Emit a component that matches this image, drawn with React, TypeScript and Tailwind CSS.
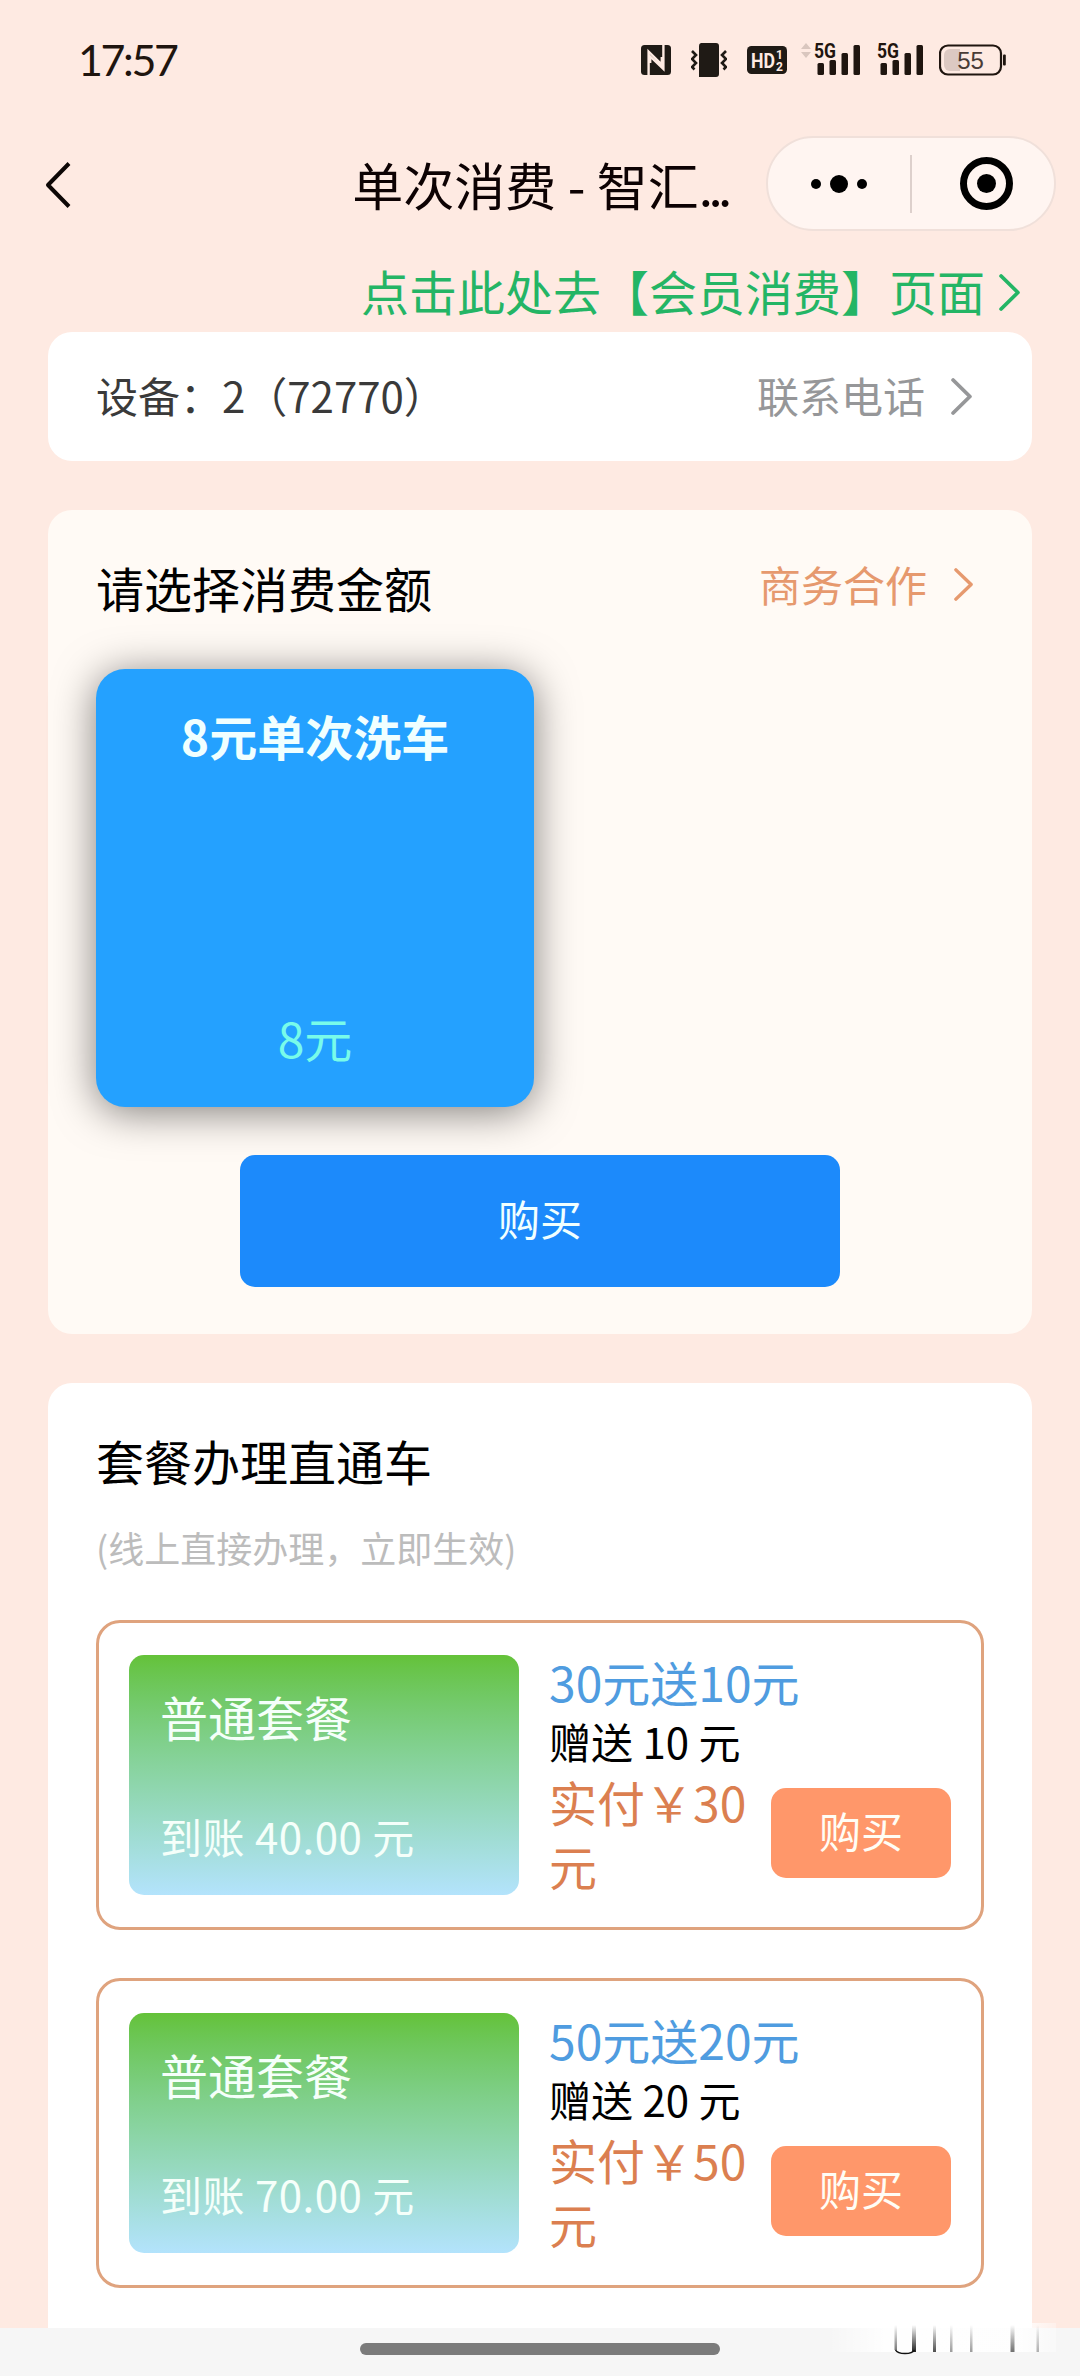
interface Plan {
	title: string;
	bonus: string;
	price: string;
	credited: string;
}

const plans: Plan[] = [
	{ title: "30元送10元", bonus: "10", price: "30", credited: "40.00" },
	{ title: "50元送20元", bonus: "20", price: "50", credited: "70.00" },
];

function Chevron({ className }: { className: string }) {
	return (
		<svg
			className={className}
			viewBox="0 0 20 36"
			fill="none"
			stroke="currentColor"
			strokeWidth="3.6"
			strokeLinecap="round"
			strokeLinejoin="round"
			preserveAspectRatio="none"
		>
			<path d="M2 2 18 18 2 34" />
		</svg>
	);
}

function Signal({ roaming }: { roaming?: boolean }) {
	return (
		<svg
			className={
				roaming
					? "ml-[14px] mb-[6px] w-[62px] h-[42px] overflow-visible"
					: "ml-[14px] mb-[6px] w-[49px] h-[42px] overflow-visible"
			}
			viewBox={roaming ? "-13 -6 62 42" : "0 -6 49 42"}
			fill="#1f150f"
		>
			{roaming && (
				<path d="M-13 7l5-6 5 6zM-13 10l5 6 5-6z" fill="#d9c6be" />
			)}
			<text
				x="0"
				y="16"
				fontSize="20.5"
				fontWeight="700"
				fontFamily="Roboto, sans-serif"
				textLength="22"
				lengthAdjust="spacingAndGlyphs"
			>
				5G
			</text>
			<rect x="3.5" y="21" width="6.5" height="12" rx="1.5" />
			<rect x="15.5" y="18" width="6.5" height="15" rx="1.5" />
			<rect x="27.5" y="11" width="6.5" height="22" rx="1.5" />
			<rect x="39.5" y="3" width="6.5" height="30" rx="1.5" />
		</svg>
	);
}

function StatusBar() {
	return (
		<div className="flex h-[120px] items-center justify-between pl-[78px] pr-[74px]">
			<span className="mb-[2px] font-[Lato] text-[43px] leading-none tracking-[-2.4px] text-[#1f150f]">
				17:57
			</span>
			<div className="mb-px flex items-center">
				<svg className="h-[30px] w-[30px]" viewBox="0 0 30 30">
					<rect width="30" height="30" rx="3.5" fill="#1f1a15" />
					<path
						d="M7.6 30V6.5L20.8 19.5V12M22.4 0V24L9.2 11.5V18"
						fill="none"
						stroke="#feeae2"
						strokeWidth="2.4"
					/>
				</svg>
				<svg className="ml-5 h-[34px] w-9" viewBox="0 0 36 34">
					<path
						d="M10 0h15a3 3 0 0 1 3 3v28a3 3 0 0 1-3 3H8V3a3 3 0 0 1 2-3z"
						fill="#1f1a15"
					/>
					<path
						d="M1 8l4 4-4 4 4 4-4 4 2.500 2.500M35 8l-4 4 4 4-4 4 4 4-2.500 2.500"
						fill="none"
						stroke="#1f1a15"
						strokeWidth="2.6"
					/>
				</svg>
				<svg className="ml-5 mt-px h-7 w-10" viewBox="0 0 40 28">
					<rect width="40" height="28" rx="4.500" fill="#1f1a15" />
					<g fill="#feeae2" fontFamily="Roboto, sans-serif" fontWeight="700">
						<text x="4" y="21.500" fontSize="20" textLength="24" lengthAdjust="spacingAndGlyphs">
							HD
						</text>
						<text x="29" y="13" fontSize="12">
							1
						</text>
						<text x="29" y="24.500" fontSize="12">
							2
						</text>
					</g>
				</svg>
				<Signal roaming />
				<Signal />
				<svg className="ml-[13px] h-[32px] w-[67px]" viewBox="0 0 67 32">
					<rect x="1" y="1.500" width="61" height="29" rx="8" fill="none" stroke="#1f150f" strokeWidth="2.200" />
					<path d="M11 5h10v22H11a6 6 0 0 1-6-6V11a6 6 0 0 1 6-6z" fill="#dcc9c2" />
					<rect x="64" y="10.500" width="2.800" height="11" rx="1" fill="#1f150f" />
					<text
						x="31.500"
						y="24.500"
						fontSize="24"
						textAnchor="middle"
						fill="#4a3c36"
						fontFamily="Liberation Sans, sans-serif"
					>
						55
					</text>
				</svg>
			</div>
		</div>
	);
}

function NavBar() {
	return (
		<div className="relative flex h-32 items-center justify-center">
			<svg
				className="absolute left-[45px] top-[42px] h-[46px] w-[26px]"
				viewBox="0 0 26 46"
				fill="none"
				stroke="#0d0705"
				strokeWidth="4"
				strokeLinejoin="round"
			>
				<path d="M24 1.500 3 23 24 44.500" />
			</svg>
			<h1 className="text-[51px] leading-[60px] text-[#0d0203]">
				单次消费 - 智汇<span className="tracking-[-4.500px]">...</span>
			</h1>
			<div className="absolute right-6 top-4 flex h-[95px] w-[290px] items-center rounded-full border-2 border-[#f0e0da] bg-[#fff5f1]">
				<div className="flex flex-1 items-center justify-center gap-[9px]">
					<i className="size-[10px] rounded-full bg-black" />
					<i className="size-[18px] rounded-full bg-black" />
					<i className="size-[10px] rounded-full bg-black" />
				</div>
				<div className="h-[58px] w-[2px] bg-[#ddd0cc]" />
				<div className="flex w-[142px] items-center justify-center pl-[6px]">
					<div className="flex size-[53px] items-center justify-center rounded-full border-[7px] border-black">
						<i className="size-[19px] rounded-full bg-black" />
					</div>
				</div>
			</div>
		</div>
	);
}

function PlanCard({ plan }: { plan: Plan }) {
	return (
		<div className="flex h-[310px] items-center rounded-3xl border-[3px] border-[#dfa37e] px-[30px]">
			<div className="flex h-60 w-[390px] shrink-0 flex-col justify-between rounded-[15px] bg-linear-to-b from-[#64c238] to-[#b3e3fc] px-[31px] pb-[31px] pt-[29px] text-[#f5fffa]">
				<div className="text-[48px] leading-[64px]">普通套餐</div>
				<div className="text-[42px] leading-[56px] tracking-[0.5px]">到账 {plan.credited} 元</div>
			</div>
			<div className="ml-[30px] flex-1 pb-[5px]">
				<div className="text-[48px] leading-[64px] text-[#4f9ce0]">{plan.title}</div>
				<div className="text-[42px] leading-[56px] text-black">赠送 {plan.bonus} 元</div>
				<div className="flex items-center justify-between">
					<div className="w-[222px] text-[48px] leading-[64px] text-[#db7f50]">
						实付￥{plan.price}元
					</div>
					<button className="h-[90px] w-[180px] shrink-0 rounded-[15px] bg-[#ff976a] pb-[5px] text-[42px] leading-none text-[#fffdf5]">
						购买
					</button>
				</div>
			</div>
		</div>
	);
}

export default function App() {
	return (
		<div className="relative flex h-[2376px] w-[1080px] flex-col overflow-hidden bg-[#feeae2] font-['Noto_Sans_CJK_SC',sans-serif]">
			<StatusBar />
			<NavBar />
			<a className="flex h-[84px] shrink-0 items-center justify-end gap-[14px] pr-[60px] text-[48px] leading-[84px] text-[#24b565]">
				点击此处去【会员消费】页面
				<Chevron className="mt-1 h-[37px] w-[21px]" />
			</a>

			<main className="flex min-h-0 flex-1 flex-col gap-[49px] overflow-hidden px-12">
				<section className="flex h-[129px] shrink-0 items-center justify-between rounded-3xl bg-white pl-12 pr-[60px] text-[42px]">
					<span className="mb-1 text-[#3a3a3a]">设备：2（72770）</span>
					<span className="mb-1 flex items-center gap-[26px] text-[#969799]">
						联系电话
						<Chevron className="mt-[3px] h-[37px] w-[21px]" />
					</span>
				</section>

				<section className="h-[824px] shrink-0 rounded-3xl bg-[#fffaf5] px-12 pt-[45px]">
					<div className="flex items-center justify-between pr-[11px]">
						<h2 className="text-[48px] leading-[64px] text-black">请选择消费金额</h2>
						<span className="mb-[6px] flex items-center gap-[27px] text-[42px] leading-[56px] text-[#e6996e]">
							商务合作
							<Chevron className="h-[33px] w-[19px]" />
						</span>
					</div>
					<div className="mt-[50px] flex size-[438px] flex-col items-center justify-between rounded-[29px] bg-[#24a1ff] pb-[38px] pt-[34px] text-[48px] leading-[64px] shadow-[0_5px_42px_rgba(0,0,0,0.5)]">
						<b className="text-[#f0ffff]">8元单次洗车</b>
						<span className="text-[#78fbea]">8元</span>
					</div>
					<button className="mx-auto mt-12 block h-[132px] w-[600px] rounded-[15px] bg-[#1c8afb] pb-2 text-[42px] text-[#f0ffff]">
						购买
					</button>
				</section>

				<section className="h-[1000px] shrink-0 rounded-t-3xl bg-white px-12 pt-[45px]">
					<h2 className="text-[48px] leading-[64px] text-black">套餐办理直通车</h2>
					<p className="mt-[31px] text-[36px] leading-[48px] text-[#bcbcbc]">
						(线上直接办理，立即生效)
					</p>
					<div className="mt-[49px] flex flex-col gap-12">
						{plans.map((plan) => (
							<PlanCard key={plan.title} plan={plan} />
						))}
					</div>
				</section>
			</main>

			<footer className="flex h-12 shrink-0 justify-center bg-[#f6f6f6] pt-[15px]">
				<div className="h-3 w-[360px] rounded-full bg-[#7b7b7b]" />
			</footer>

			{/* faded stamp in the corner, only its lower edge is visible */}
			<svg className="absolute left-[824px] top-[2318px] h-[38px] w-[234px]" viewBox="0 0 234 38">
				<defs>
					<linearGradient id="fade" x1="0" y1="0" x2="0" y2="1">
						<stop offset="0" stopColor="#222" stopOpacity="0" />
						<stop offset="1" stopColor="#222" />
					</linearGradient>
					<linearGradient id="haze" x1="0" y1="0" x2="1" y2="0">
						<stop offset="0" stopColor="#fff" stopOpacity="0" />
						<stop offset="0.25" stopColor="#fff" stopOpacity="0.9" />
						<stop offset="0.85" stopColor="#fff" stopOpacity="0.85" />
						<stop offset="1" stopColor="#fff" stopOpacity="0.3" />
					</linearGradient>
				</defs>
				<rect x="4" y="5" width="228" height="29" fill="url(#haze)" />
				<g fill="url(#fade)">
					<rect x="70.500" y="7" width="2.500" height="25" opacity="0.6" />
					<rect x="88" y="7" width="4" height="27" />
					<rect x="109" y="7" width="3" height="27" opacity="0.8" />
					<rect x="126" y="7" width="2.500" height="27" opacity="0.45" />
					<rect x="146" y="7" width="2.500" height="27" opacity="0.45" />
					<rect x="186.500" y="7" width="4" height="27" opacity="0.65" />
					<rect x="212.500" y="7" width="2.500" height="27" opacity="0.35" />
				</g>
				<path d="M71.500 32q2 3.500 9.500 3.500t9.500-3.500" fill="none" stroke="#111" strokeWidth="1.500" />
			</svg>
		</div>
	);
}
